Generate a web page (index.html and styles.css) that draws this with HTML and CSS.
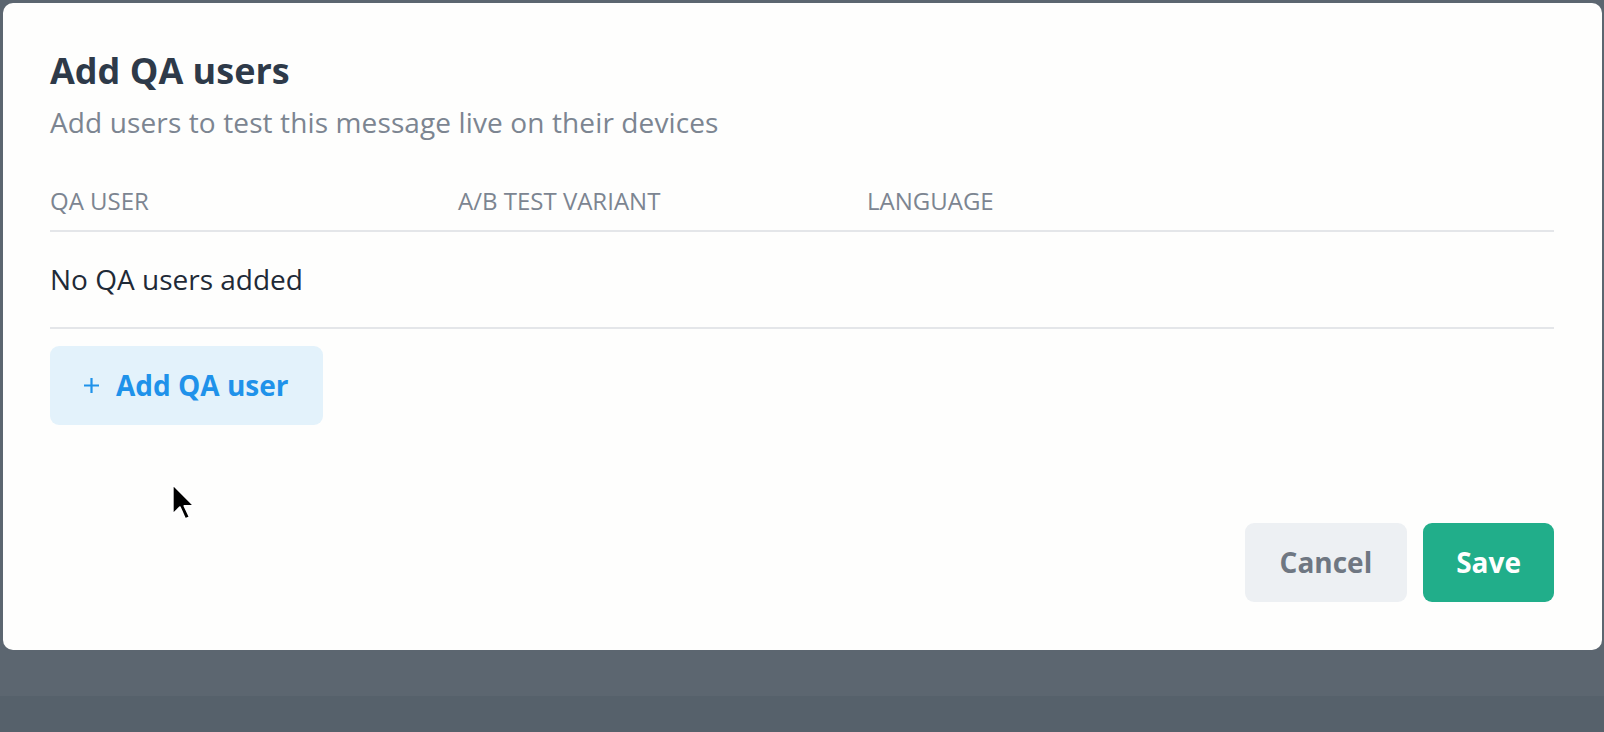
FILE: index.html
```html
<!DOCTYPE html>
<html lang="en">
<head>
    <title>Add QA users</title>
    <link rel="stylesheet" href="styles.css">
</head>
<body>
    <div class="modal">
        <h1 class="modal-title">Add QA users</h1>
        <p class="modal-subtitle">Add users to test this message live on their devices</p>

        <div class="qa-table">
            <div class="qa-head">
                <div>QA USER</div>
                <div>A/B TEST VARIANT</div>
                <div>LANGUAGE</div>
            </div>
            <div class="qa-empty">No QA users added</div>
        </div>

        <button class="add-button">
            <svg class="plus" width="17" height="17" viewBox="0 0 17 17">
                <path d="M8.5 1v15M1 8.5h15" stroke="currentColor" stroke-width="2.2" fill="none"/>
            </svg>
            Add QA user
        </button>

        <div class="modal-footer">
            <button class="btn btn-cancel">Cancel</button>
            <button class="btn btn-save">Save</button>
        </div>
    </div>
    <div class="bottom-band"></div>

    <!-- mouse pointer from the capture -->
    <svg class="cursor" width="29" height="42" viewBox="0 0 22 32">
        <path d="M2 1 L2 24 L7.5 18.5 L11.5 27.5 L15 26 L11 17.5 L18.5 17.5 Z" fill="#000" stroke="#fff" stroke-width="1.5" stroke-linejoin="round"/>
    </svg>
</body>
</html>
```

FILE: styles.css
```css
body {
    margin: 0;
    background-color: #5c6670;
    font-family: "Open Sans", "Noto Sans", sans-serif;
    height: 732px;
    overflow: hidden;
    position: relative;
}
.modal {
    margin: 3px 2px 0 3px;
    background: #fefefd;
    border-radius: 10px;
    padding: 48px 48px 48px 47px;
    height: 647px;
    box-sizing: border-box;
    display: flex;
    flex-direction: column;
}
.modal-title {
    margin: 0;
    font-size: 36px;
    line-height: 40px;
    font-weight: 700;
    color: #2e3a49;
}
.modal-subtitle {
    margin: 12px 0 0;
    font-size: 28px;
    line-height: 38px;
    letter-spacing: 0.12px;
    color: #7c8591;
}
.qa-table {
    margin-top: 32px;
}
.qa-head {
    display: grid;
    grid-template-columns: 408px 409px 1fr;
    padding: 12px 0 13px;
    font-size: 24px;
    line-height: 32px;
    color: #7c8591;
    border-bottom: 2px solid #e4e6e9;
}
.qa-empty {
    padding: 27px 0 28px;
    font-size: 28px;
    line-height: 40px;
    color: #1f2a37;
    border-bottom: 2px solid #e4e6e9;
}
.add-button {
    align-self: flex-start;
    margin-top: 17px;
    display: flex;
    align-items: center;
    gap: 16px;
    border: none;
    border-radius: 9px;
    background: #e3f2fb;
    color: #1f92ea;
    font-family: inherit;
    font-size: 28px;
    font-weight: 700;
    line-height: 40px;
    padding: 19px 35px 20px 33px;
}
.plus {
    display: block;
}
.modal-footer {
    margin-top: auto;
    display: flex;
    justify-content: flex-end;
    gap: 16px;
}
.btn {
    border: none;
    border-radius: 9px;
    font-family: inherit;
    font-size: 28px;
    font-weight: 700;
    line-height: 40px;
    padding: 19px 35px 20px;
}
.btn-cancel {
    background: #edf0f3;
    color: #6f7782;
}
.btn-save {
    background: #21ae8a;
    color: #ffffff;
    padding-left: 33px;
    padding-right: 33px;
}
.bottom-band {
    position: absolute;
    left: 0;
    right: 0;
    top: 696px;
    height: 36px;
    background: #56616b;
}
.cursor {
    position: absolute;
    left: 170px;
    top: 483px;
}
```
